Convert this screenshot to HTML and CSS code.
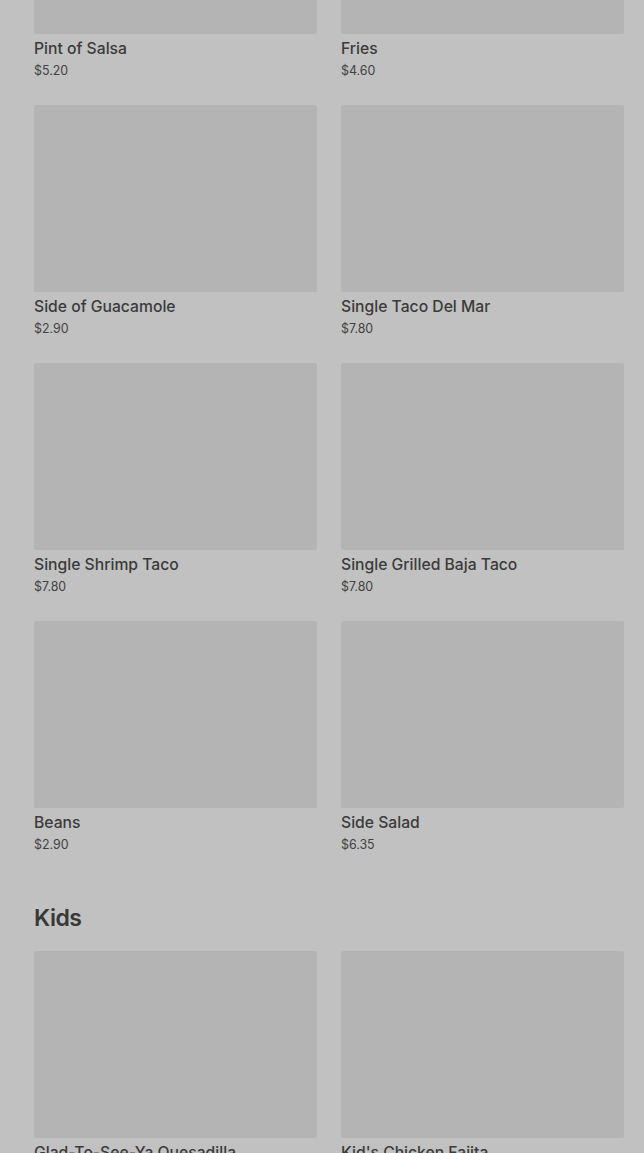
FILE: index.html
```html
<!DOCTYPE html>
<html lang="en">
<head>
<meta charset="utf-8">
<title>Menu</title>
<link rel="stylesheet" href="styles.css">
</head>
<body>
<main class="menu">
  <section class="section section--scrolled">
    <div class="grid">
      <div class="card"><div class="thumb"></div><div class="name">Pint of Salsa</div><div class="price">$5.20</div></div>
      <div class="card"><div class="thumb"></div><div class="name">Fries</div><div class="price">$4.60</div></div>
      <div class="card"><div class="thumb"></div><div class="name">Side of Guacamole</div><div class="price">$2.90</div></div>
      <div class="card"><div class="thumb"></div><div class="name">Single Taco Del Mar</div><div class="price">$7.80</div></div>
      <div class="card"><div class="thumb"></div><div class="name">Single Shrimp Taco</div><div class="price">$7.80</div></div>
      <div class="card"><div class="thumb"></div><div class="name">Single Grilled Baja Taco</div><div class="price">$7.80</div></div>
      <div class="card"><div class="thumb"></div><div class="name">Beans</div><div class="price">$2.90</div></div>
      <div class="card"><div class="thumb"></div><div class="name">Side Salad</div><div class="price">$6.35</div></div>
    </div>
  </section>
  <section class="section">
    <h2 class="section-title">Kids</h2>
    <div class="grid">
      <div class="card"><div class="thumb"></div><div class="name">Glad-To-See-Ya Quesadilla</div><div class="price">$5.50</div></div>
      <div class="card"><div class="thumb"></div><div class="name">Kid's Chicken Fajita</div><div class="price">$5.50</div></div>
    </div>
  </section>
</main>
</body>
</html>
```
FILE: styles.css
```css
html, body {
  margin: 0;
  padding: 0;
  background: #c1c1c1;
  font-family: Inter, "Liberation Sans", sans-serif;
  color: #3c3c3c;
  overflow: hidden;
}
.menu {
  padding: 0 20px 0 34px;
}
.section--scrolled {
  margin-top: -153px;
}
.grid {
  display: grid;
  grid-template-columns: 283px 283px;
  column-gap: 24px;
  row-gap: 24px;
}
.card {
  padding-bottom: 1px;
}
.thumb {
  height: 187px;
  background: #b4b4b4;
  border-radius: 2px;
}
.name {
  margin-top: 5px;
  font-size: 15.7px;
  line-height: 20px;
  font-weight: 500;
  color: #3b3b3b;
  white-space: nowrap;
}
.price {
  margin-top: 3px;
  font-size: 12.4px;
  line-height: 18px;
  color: #424242;
}
.section-title {
  margin: 47px 0 17px;
  font-size: 23px;
  line-height: 32px;
  font-weight: 600;
  letter-spacing: -0.5px;
  color: #383838;
}
```
